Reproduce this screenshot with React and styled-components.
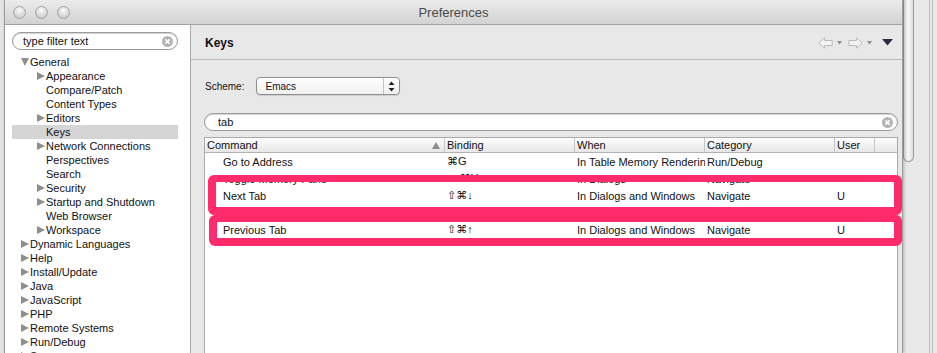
import React from "react";
import styled, { createGlobalStyle } from "styled-components";

const GlobalStyle = createGlobalStyle`
  html, body { margin: 0; padding: 0; background: #e6e6e6; }
  body {
    font-family: "Liberation Sans", "DejaVu Sans", Arial, sans-serif;
    font-size: 11px;
    color: #111;
  }
  * { box-sizing: border-box; }
`;

const tree = [
  { label: "General", depth: 0, arrow: "down" },
  { label: "Appearance", depth: 1, arrow: "right" },
  { label: "Compare/Patch", depth: 1 },
  { label: "Content Types", depth: 1 },
  { label: "Editors", depth: 1, arrow: "right" },
  { label: "Keys", depth: 1, selected: true },
  { label: "Network Connections", depth: 1, arrow: "right" },
  { label: "Perspectives", depth: 1 },
  { label: "Search", depth: 1 },
  { label: "Security", depth: 1, arrow: "right" },
  { label: "Startup and Shutdown", depth: 1, arrow: "right" },
  { label: "Web Browser", depth: 1 },
  { label: "Workspace", depth: 1, arrow: "right" },
  { label: "Dynamic Languages", depth: 0, arrow: "right" },
  { label: "Help", depth: 0, arrow: "right" },
  { label: "Install/Update", depth: 0, arrow: "right" },
  { label: "Java", depth: 0, arrow: "right" },
  { label: "JavaScript", depth: 0, arrow: "right" },
  { label: "PHP", depth: 0, arrow: "right" },
  { label: "Remote Systems", depth: 0, arrow: "right" },
  { label: "Run/Debug", depth: 0, arrow: "right" },
  { label: "Server", depth: 0, arrow: "right" },
];

const columns = ["Command", "Binding", "When", "Category", "User", ""];

const bindings = [
  ["Go to Address", "⌘G", "In Table Memory Renderin", "Run/Debug", ""],
  ["Toggle Memory Pane", "⌥⌘Y", "In Dialogs", "Navigate", ""],
  ["Next Tab", "⇧⌘↓", "In Dialogs and Windows", "Navigate", "U"],
  ["Previous Page", "⌥⌘↑", "In Windows", "Navigate", ""],
  ["Previous Tab", "⇧⌘↑", "In Dialogs and Windows", "Navigate", "U"],
];

// pink call-outs drawn over the table, relative to its top-left corner
const marks = [
  { left: 3, top: 37, width: 694, height: 40 },
  { left: 4, top: 77, width: 693, height: 31 },
];

export default function App() {
  return (
    <>
      <GlobalStyle />
      <Screen>
        <BackLeft />
        <Window>
          <TitleBar>
            <Lights>
              <Light />
              <Light />
              <Light />
            </Lights>
            <Title>Preferences</Title>
          </TitleBar>
          <Body>
            <Sidebar>
              <SearchField>
                <span>type filter text</span>
                <ClearIcon />
              </SearchField>
              <Tree>
                {tree.map((item) => (
                  <TreeRow key={item.label} depth={item.depth} selected={item.selected}>
                    <Twisty>{item.arrow && <Arrow dir={item.arrow} />}</Twisty>
                    {item.label}
                  </TreeRow>
                ))}
              </Tree>
            </Sidebar>
            <Main>
              <Header>
                <PageTitle>Keys</PageTitle>
                <Nav>
                  <NavArrow />
                  <MiniDrop />
                  <NavArrow flip />
                  <MiniDrop />
                  <MenuDrop />
                </Nav>
              </Header>
              <Content>
                <SchemeRow>
                  <span>Scheme:</span>
                  <Select>
                    <span>Emacs</span>
                    <Stepper>
                      <svg width="7" height="11" viewBox="0 0 7 11">
                        <path d="M3.5 0.5 L6.5 4 H0.5 Z" fill="#222" />
                        <path d="M3.5 10.5 L6.5 7 H0.5 Z" fill="#222" />
                      </svg>
                    </Stepper>
                  </Select>
                </SchemeRow>
                <FilterField>
                  <span>tab</span>
                  <ClearIcon />
                </FilterField>
                <Table>
                  <HeadRow>
                    {columns.map((c, i) => (
                      <HeadCell key={i}>
                        <span>{c}</span>
                        {i === 0 && <SortArrow />}
                      </HeadCell>
                    ))}
                  </HeadRow>
                  {bindings.map((r, i) => (
                    <Row key={i}>
                      {r.map((v, j) => (
                        <Cell key={j} first={j === 0}>
                          {v}
                        </Cell>
                      ))}
                      <Cell />
                    </Row>
                  ))}
                  {marks.map((m, i) => (
                    <Callout
                      key={i}
                      style={{ left: m.left, top: m.top, width: m.width, height: m.height }}
                    />
                  ))}
                </Table>
              </Content>
            </Main>
          </Body>
        </Window>
        <BackRight>
          <Thumb />
          <Rule />
          <Rule />
        </BackRight>
      </Screen>
    </>
  );
}

function ClearIcon() {
  return (
    <Clear>
      <svg width="11" height="11" viewBox="0 0 11 11">
        <circle cx="5.5" cy="5.5" r="5.5" fill="#b4b4b4" />
        <path d="M3.4 3.4 L7.6 7.6 M7.6 3.4 L3.4 7.6" stroke="#fff" strokeWidth="1.5" />
      </svg>
    </Clear>
  );
}

function NavArrow({ flip }) {
  return (
    <svg
      width="15"
      height="12"
      viewBox="0 0 15 12"
      style={flip ? { transform: "scaleX(-1)" } : undefined}
    >
      <path
        d="M0.8 6 L6.5 0.8 V3.5 H14.2 V8.5 H6.5 V11.2 Z"
        fill="#f3f3f3"
        stroke="#bcbcbc"
      />
    </svg>
  );
}

function MiniDrop() {
  return (
    <svg width="5" height="4" viewBox="0 0 5 4">
      <path d="M0 0 H5 L2.5 3.5 Z" fill="#8c8c8c" />
    </svg>
  );
}

function MenuDrop() {
  return (
    <svg width="11" height="7" viewBox="0 0 11 7">
      <path d="M0 0 H11 L5.5 6.5 Z" fill="#2b2b45" />
    </svg>
  );
}

const Screen = styled.div`
  display: flex;
  width: 937px;
  height: 353px;
  overflow: hidden;
  background: #e8e8e8;
`;

const BackLeft = styled.div`
  width: 4px;
  flex: none;
  background: #e3e3e8;
`;

const Window = styled.div`
  width: 899px;
  flex: none;
  display: flex;
  flex-direction: column;
  border-left: 1px solid #9a9a9a;
  border-right: 1px solid #9f9f9f;
  box-shadow: 1px 0 3px rgba(0, 0, 0, 0.25);
  position: relative;
  z-index: 1;
`;

const TitleBar = styled.div`
  height: 25px;
  flex: none;
  display: flex;
  align-items: center;
  position: relative;
  background: linear-gradient(#ebebeb, #d2d2d2);
  border-bottom: 1px solid #a3a3a3;
`;

const Lights = styled.div`
  display: flex;
  gap: 9px;
  padding-left: 8px;
  margin-top: 1px;
`;

const Light = styled.div`
  width: 13px;
  height: 13px;
  border-radius: 50%;
  border: 1px solid #a2a2a2;
  background: radial-gradient(circle at 50% 30%, #fbfbfb, #d6d6d6 60%, #c4c4c4);
`;

const Title = styled.div`
  position: absolute;
  left: 0;
  right: 0;
  top: 5px;
  text-align: center;
  font-size: 13px;
  color: #4b4b4b;
  pointer-events: none;
`;

const Body = styled.div`
  flex: 1;
  display: flex;
  min-height: 0;
`;

const Sidebar = styled.div`
  width: 186px;
  flex: none;
  background: #fff;
  border-right: 1px solid #aaaaaa;
  padding: 7px 0 0 7px;
`;

const SearchField = styled.div`
  width: 166px;
  height: 18px;
  display: flex;
  align-items: center;
  justify-content: space-between;
  padding: 0 4px 0 10px;
  border: 1px solid #9b9b9b;
  border-radius: 9px;
  background: #fff;
  box-shadow: inset 0 1px 1px rgba(0, 0, 0, 0.18);
  font-size: 11px;
`;

const Clear = styled.span`
  display: flex;
`;

const Tree = styled.div`
  width: 166px;
  margin-top: 5px;
`;

const TreeRow = styled.div`
  height: 14px;
  display: flex;
  align-items: center;
  padding-left: ${(p) => 9 + p.depth * 16}px;
  background: ${(p) => (p.selected ? "#d5d5d5" : "transparent")};
  white-space: nowrap;
`;

const Twisty = styled.span`
  width: 9px;
  flex: none;
  display: flex;
  align-items: center;
`;

const Arrow = styled.span`
  width: 0;
  height: 0;
  ${(p) =>
    p.dir === "down"
      ? `border-left: 4.5px solid transparent;
         border-right: 4.5px solid transparent;
         border-top: 8px solid #8e8e8e;`
      : `border-top: 4.5px solid transparent;
         border-bottom: 4.5px solid transparent;
         border-left: 8px solid #8e8e8e;`}
`;

const Main = styled.div`
  flex: 1;
  display: flex;
  flex-direction: column;
  background: #e8e8e8;
  min-width: 0;
`;

const Header = styled.div`
  height: 35px;
  flex: none;
  display: flex;
  align-items: center;
  justify-content: space-between;
  padding: 1px 9px 0 14px;
  border-bottom: 1px solid #b9b9b9;
`;

const PageTitle = styled.div`
  font-size: 12px;
  font-weight: bold;
  color: #111;
`;

const Nav = styled.div`
  display: flex;
  align-items: center;
  gap: 4px;

  & > svg:nth-child(2),
  & > svg:nth-child(4) {
    margin-right: 2px;
  }
  & > svg:last-child {
    margin-left: 4px;
  }
`;

const Content = styled.div`
  flex: 1;
  display: flex;
  flex-direction: column;
  padding: 17px 4px 0 13px;
  min-height: 0;
`;

const SchemeRow = styled.div`
  height: 18px;
  display: flex;
  align-items: center;
  gap: 12px;
  padding-left: 1px;
  font-size: 10px;
`;

const Select = styled.div`
  width: 144px;
  height: 18px;
  display: flex;
  align-items: center;
  justify-content: space-between;
  padding-left: 8px;
  border: 1px solid #8e8e8e;
  border-radius: 4px;
  background: linear-gradient(#ffffff, #f0f0f0);
  box-shadow: 0 1px 1px rgba(0, 0, 0, 0.12);
  font-size: 10px;
`;

const Stepper = styled.span`
  width: 16px;
  height: 100%;
  display: flex;
  align-items: center;
  justify-content: center;
  border-left: 1px solid #c4c4c4;
`;

const FilterField = styled(SearchField)`
  width: 694px;
  margin-top: 18px;
  padding-left: 13px;
  flex: none;
`;

const Table = styled.div`
  flex: 1;
  margin-top: 6px;
  position: relative;
  background: #fff;
  border: 1px solid #a9a9a9;
  border-bottom: none;
`;

const grid = `
  display: grid;
  grid-template-columns: 240px 130px 130px 130px 40px 1fr;
`;

const HeadRow = styled.div`
  ${grid}
  height: 15px;
  background: linear-gradient(#fdfdfd, #e7e7e7);
  border-bottom: 1px solid #b3b3b3;
`;

const HeadCell = styled.div`
  display: flex;
  align-items: center;
  justify-content: space-between;
  padding: 0 4px 0 2px;
  border-right: 1px solid #c6c6c6;
  white-space: nowrap;

  &:last-child {
    border-right: none;
  }
`;

const SortArrow = styled.span`
  width: 0;
  height: 0;
  border-left: 4px solid transparent;
  border-right: 4px solid transparent;
  border-bottom: 7px solid #8c8c8c;
`;

const Row = styled.div`
  ${grid}
  height: 17px;
  align-items: center;
`;

const Cell = styled.div`
  padding-left: ${(p) => (p.first ? 18 : 2)}px;
  white-space: nowrap;
  overflow: hidden;
`;

const Callout = styled.div`
  position: absolute;
  border: 8px solid #ff2b6c;
  border-top-width: 7px;
  border-radius: 6px;
  pointer-events: none;
`;

const BackRight = styled.div`
  flex: 1;
  display: flex;
  gap: 2px;
  padding-right: 4px;
  background: #e9e9e9;
`;

const Thumb = styled.div`
  width: 11px;
  height: 162px;
  margin-right: 13px;
  border: 1px solid #9d9d9d;
  border-top: none;
  border-radius: 0 0 6px 6px;
  background: linear-gradient(to right, #dcdcdc, #f7f7f7 50%, #dcdcdc);
`;

const Rule = styled.div`
  width: 1px;
  background: #bcbcbc;
`;
